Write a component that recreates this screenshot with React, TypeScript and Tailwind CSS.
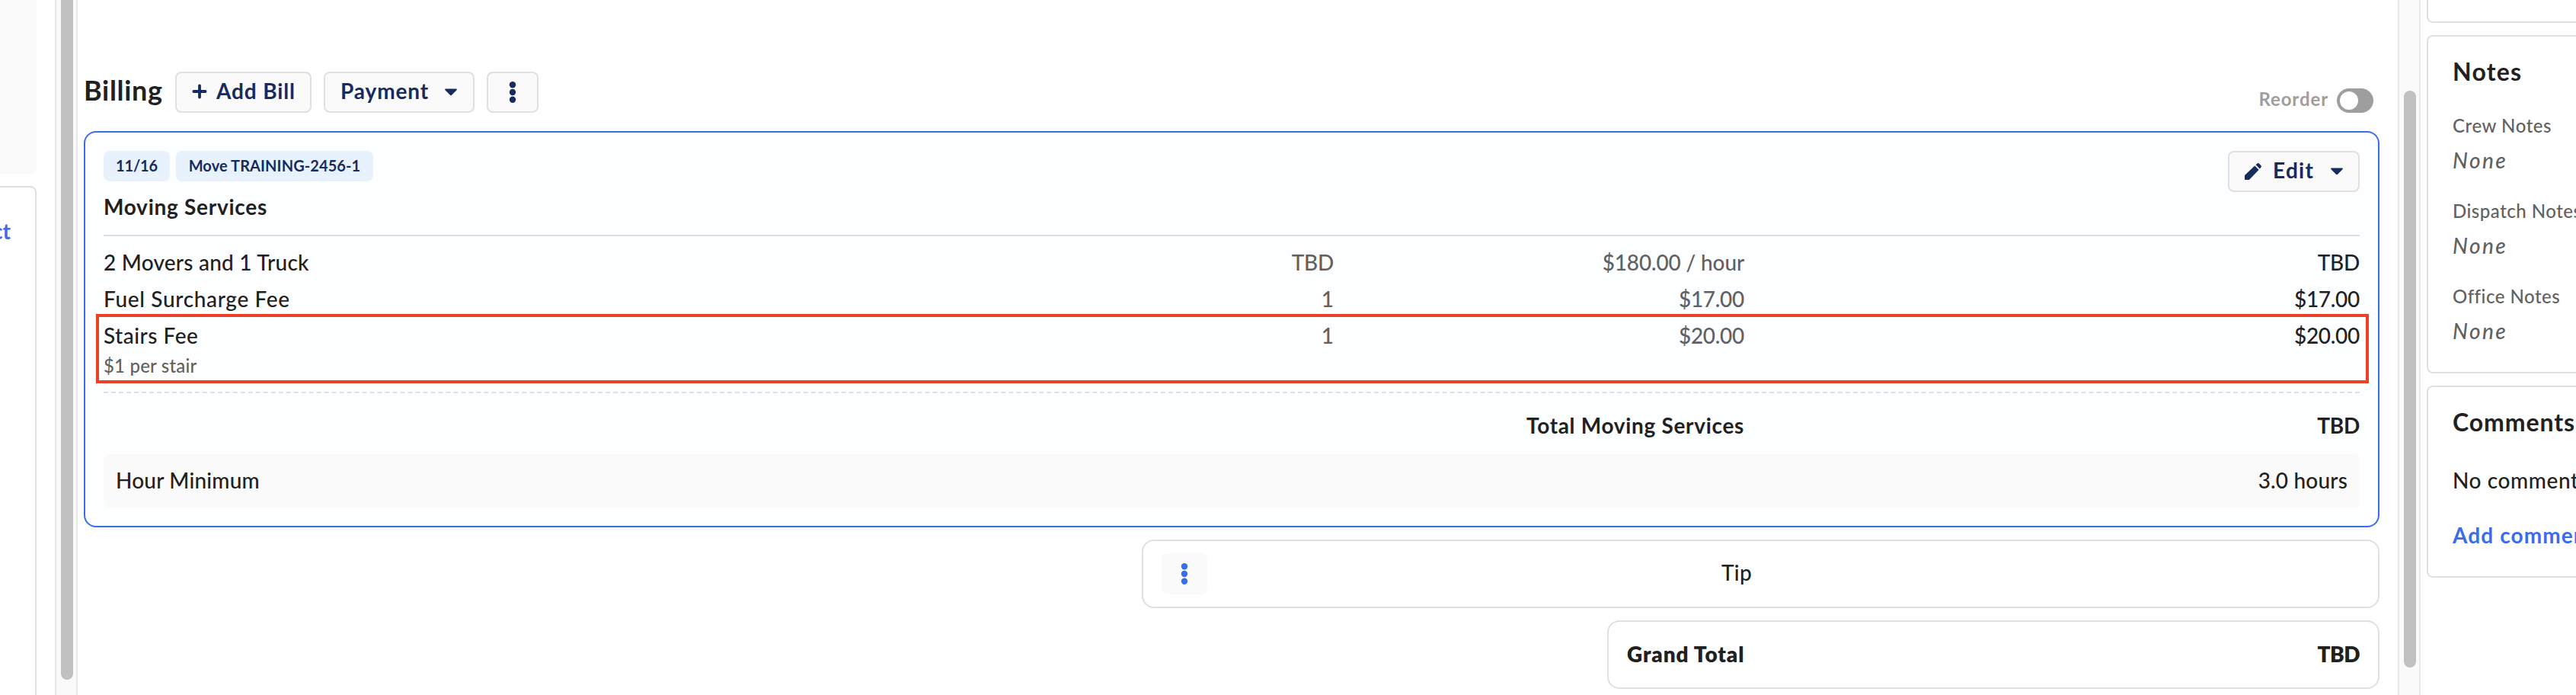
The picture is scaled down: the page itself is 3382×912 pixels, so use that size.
import clsx from 'clsx'

const buttonClass = "flex items-center h-[54px] shrink-0 border-2 rounded-lg border-[#e0e0e0] bg-[#fafafa] text-[#172b5f] font-bold"
const cardClass = "border-2 border-[#e0e0e0] bg-white"

const notes = [
  { label: 'Crew Notes', tracking: 'tracking-[0.55px]' },
  { label: 'Dispatch Notes', tracking: 'tracking-[0.5px]' },
  { label: 'Office Notes', tracking: 'tracking-[0.5px]' },
]

const items = [
  {
    name: '2 Movers and 1 Truck', nameClass: 'tracking-[0.23px]',
    qty: 'TBD', qtyClass: 'tracking-[-0.3px] pr-px',
    price: '$180.00 / hour', priceClass: 'tracking-[-0.15px]',
    total: 'TBD', totalClass: 'tracking-[-0.3px]',
  },
  {
    name: 'Fuel Surcharge Fee', nameClass: 'tracking-[0.66px]',
    qty: '1', qtyClass: 'pr-px',
    price: '$17.00', priceClass: 'tracking-[-0.3px]',
    total: '$17.00', totalClass: 'tracking-[-0.3px]',
  },
  {
    name: 'Stairs Fee', nameClass: 'tracking-[0.51px]',
    qty: '1', qtyClass: 'pr-px',
    price: '$20.00', priceClass: 'tracking-[-0.3px]',
    total: '$20.00', totalClass: 'tracking-[-0.3px]',
    description: '$1 per stair',
    highlighted: true,
  },
]

function CaretIcon() {
  return (
    <svg width="16" height="10" viewBox="0 0 16 10" fill="currentColor">
      <path d="M1.2 0.6h13.6c0.9 0 1.3 1 0.7 1.6L9 8.7c-0.6 0.6-1.4 0.6-2 0L0.5 2.2C-0.1 1.6 0.3 0.6 1.2 0.6z" />
    </svg>
  )
}

function DotsIcon() {
  return (
    <svg width="10" height="30" viewBox="0 0 10 30" fill="currentColor">
      <circle cx="5" cy="5.3" r="4.2" />
      <circle cx="5" cy="15" r="4.2" />
      <circle cx="5" cy="24.7" r="4.2" />
    </svg>
  )
}

function PlusIcon() {
  return (
    <svg width="20" height="20" viewBox="0 0 20 20" fill="none" stroke="currentColor" strokeWidth="3.8" strokeLinecap="round">
      <path d="M10 2.4v15.2M2.4 10h15.2" />
    </svg>
  )
}

function PencilIcon() {
  return (
    <svg width="22" height="22" viewBox="0 0 22 22" fill="currentColor">
      <path d="M0 21.2v-4.4c0-0.5 0.2-1 0.6-1.4L13.2 3.4l5.4 5.4L6.4 21.4c-0.4 0.4-0.8 0.6-1.4 0.6H0.8c-0.5 0-0.8-0.3-0.8-0.8z" />
      <path d="M14.6 2.2L16.2 0.7c0.9-0.9 2-0.9 2.9 0l2.2 2.2c0.9 0.9 0.9 2 0 2.9l-1.5 1.6z" />
    </svg>
  )
}

function Gutter({ thumbClass }: { thumbClass: string }) {
  return (
    <div className="w-[30px] shrink-0 h-full border-x-2 border-[#e8e8e8] bg-[#fafafa] pl-1.5">
      <div className={clsx('w-4 bg-[#c1c1c1]', thumbClass)} />
    </div>
  )
}

function BillingHeader() {
  return (
    <div className="flex h-[54px]">
      <h2 className="w-[120px] shrink-0 text-[36px] leading-[48px] font-bold tracking-[0.69px]">Billing</h2>
      <div className="flex gap-4">
        <button className={clsx(buttonClass, 'w-[179px] pl-5 gap-3')}>
          <span className="-mt-0.5"><PlusIcon /></span>
          <span className="-mt-1 tracking-[0.85px] whitespace-nowrap">Add Bill</span>
        </button>
        <button className={clsx(buttonClass, 'w-[198px] pl-5 pr-[21px] justify-between')}>
          <span className="-mt-1 tracking-[0.9px]">Payment</span>
          <CaretIcon />
        </button>
        <button className={clsx(buttonClass, 'w-[68px] justify-center')}>
          <DotsIcon />
        </button>
      </div>
      <div className="flex items-center self-end h-8 ml-auto mr-2 gap-[11px]">
        <span className="-mt-[5px] text-[24px] font-bold tracking-[0.9px] text-[#9e9e9e]">Reorder</span>
        <div className="flex items-center w-12 h-8 rounded-full bg-[#9e9e9e] px-1">
          <div className="w-6 h-6 rounded-full bg-white" />
        </div>
      </div>
    </div>
  )
}

function BillCard() {
  return (
    <div className="h-[520px] mt-6 border-2 border-[#3a6de8] rounded-2xl bg-[#fdfeff] p-6">
      <div className="flex justify-between h-[110px]">
        <div>
          <div className="flex gap-2 h-10 text-[20px] font-bold text-[#172b5f]">
            <div className="flex items-center justify-center w-[87px] rounded-lg bg-[#e8f2fd] pb-[3px] tracking-[-0.15px]">11/16</div>
            <div className="flex items-center justify-center w-[259px] rounded-lg bg-[#e8f2fd] pb-[3px] tracking-[0.09px]">Move TRAINING-2456-1</div>
          </div>
          <h3 className="mt-[13px] leading-10 font-bold tracking-[0.73px]">Moving Services</h3>
        </div>
        <button className={clsx(buttonClass, 'w-[173px] px-5')}>
          <PencilIcon />
          <span className="-mt-1 ml-[15px] tracking-[1.3px]">Edit</span>
          <span className="ml-auto"><CaretIcon /></span>
        </button>
      </div>

      <div className="border-t-2 border-[#e0e0e0] pt-2.5">
        {items.map(item => (
          <div key={item.name} className={clsx('relative', item.highlighted && 'h-20')}>
            <div className="grid grid-cols-[1616px_538px_1fr] h-12 leading-[48px]">
              <div className="flex justify-between">
                <span className={item.nameClass}>{item.name}</span>
                <span className={clsx('text-[#616161]', item.qtyClass)}>{item.qty}</span>
              </div>
              <div className={clsx('text-right text-[#616161]', item.priceClass)}>{item.price}</div>
              <div className={clsx('text-right', item.totalClass)}>{item.total}</div>
            </div>
            {item.description && (
              <p className="text-[24px] leading-8 tracking-[0.19px] text-[#616161]">{item.description}</p>
            )}
            {item.highlighted && (
              <div className="absolute -top-1 -bottom-[7px] -left-2.5 -right-3 border-4 border-[#ec4027]" />
            )}
          </div>
        ))}
      </div>

      <div className="grid grid-cols-[2154px_1fr] mt-[18px] border-t-2 border-dashed border-[#e0e0e0] pt-[22px] leading-10 font-bold text-right">
        <span className="tracking-[0.68px]">Total Moving Services</span>
        <span className="tracking-[-0.3px]">TBD</span>
      </div>

      <div className="flex items-center justify-between h-[70px] mt-[18px] rounded-lg bg-[#fafafa] px-4 pb-[3px]">
        <span className="tracking-[0.2px]">Hour Minimum</span>
        <span className="tracking-[0.18px]">3.0 hours</span>
      </div>
    </div>
  )
}

function NotesColumn() {
  return (
    <div className="w-[320px] shrink-0 pl-2 whitespace-nowrap">
      <div className={clsx(cardClass, 'h-[30px] rounded-b-lg border-t-0')} />

      <div className={clsx(cardClass, 'h-[444px] mt-4 rounded-lg pl-8 pt-[26px]')}>
        <h3 className="mb-[35px] text-[32px] leading-10 font-bold tracking-[1.23px]">Notes</h3>
        {notes.map(note => (
          <div key={note.label} className="mb-[31px] text-[#616161]">
            <p className={clsx('text-[24px] leading-8', note.tracking)}>{note.label}</p>
            <p className="mt-[9px] leading-10 italic tracking-[2.4px]">None</p>
          </div>
        ))}
      </div>

      <div className={clsx(cardClass, 'h-[252px] mt-4 rounded-lg pl-8 pt-[26px]')}>
        <h3 className="text-[32px] leading-10 font-bold tracking-[0.91px]">Comments</h3>
        <p className="mt-9 leading-10 tracking-[0.6px]">No comments</p>
        <p className="mt-8 leading-10 font-bold tracking-[1.1px] text-[#3a6de8]">Add comment</p>
      </div>
    </div>
  )
}

export default function App() {
  return (
    <div className="flex w-[3382px] h-[912px] overflow-hidden bg-white font-['Lato',sans-serif] text-[28px] font-medium text-[#212121]">
      <div className="w-[72px] shrink-0">
        <div className="w-12 h-[228px] rounded-br-lg bg-[#fafafa]" />
        <div className={clsx(cardClass, 'w-12 h-[700px] mt-4 rounded-tr-lg border-l-0 pt-[37px]')}>
          <p className="-ml-2.5 leading-10 font-bold text-[#3a6de8]">ct</p>
        </div>
      </div>

      <Gutter thumbClass="h-[892px] rounded-b-full" />

      <div className="w-[3046px] shrink-0 pl-2 pr-6 pt-[94px]">
        <BillingHeader />
        <BillCard />
        <div className={clsx(cardClass, 'flex items-center w-[1625px] h-[90px] mt-4 ml-auto rounded-2xl px-6')}>
          <div className="flex items-center justify-center w-[60px] h-[54px] rounded-lg bg-[#fafafa] text-[#3a6de8]">
            <DotsIcon />
          </div>
          <span className="ml-[675px] -mt-1 tracking-[0.34px]">Tip</span>
        </div>
        <div className={clsx(cardClass, 'grid grid-cols-[154px_1fr] items-center w-[1014px] h-[90px] mt-4 ml-auto rounded-2xl px-6 pb-0.5 font-extrabold')}>
          <span className="tracking-[0.85px] whitespace-nowrap">Grand Total</span>
          <span className="text-right tracking-[-0.5px]">TBD</span>
        </div>
      </div>

      <Gutter thumbClass="h-[757px] translate-y-[119px] rounded-full" />

      <NotesColumn />
    </div>
  )
}
